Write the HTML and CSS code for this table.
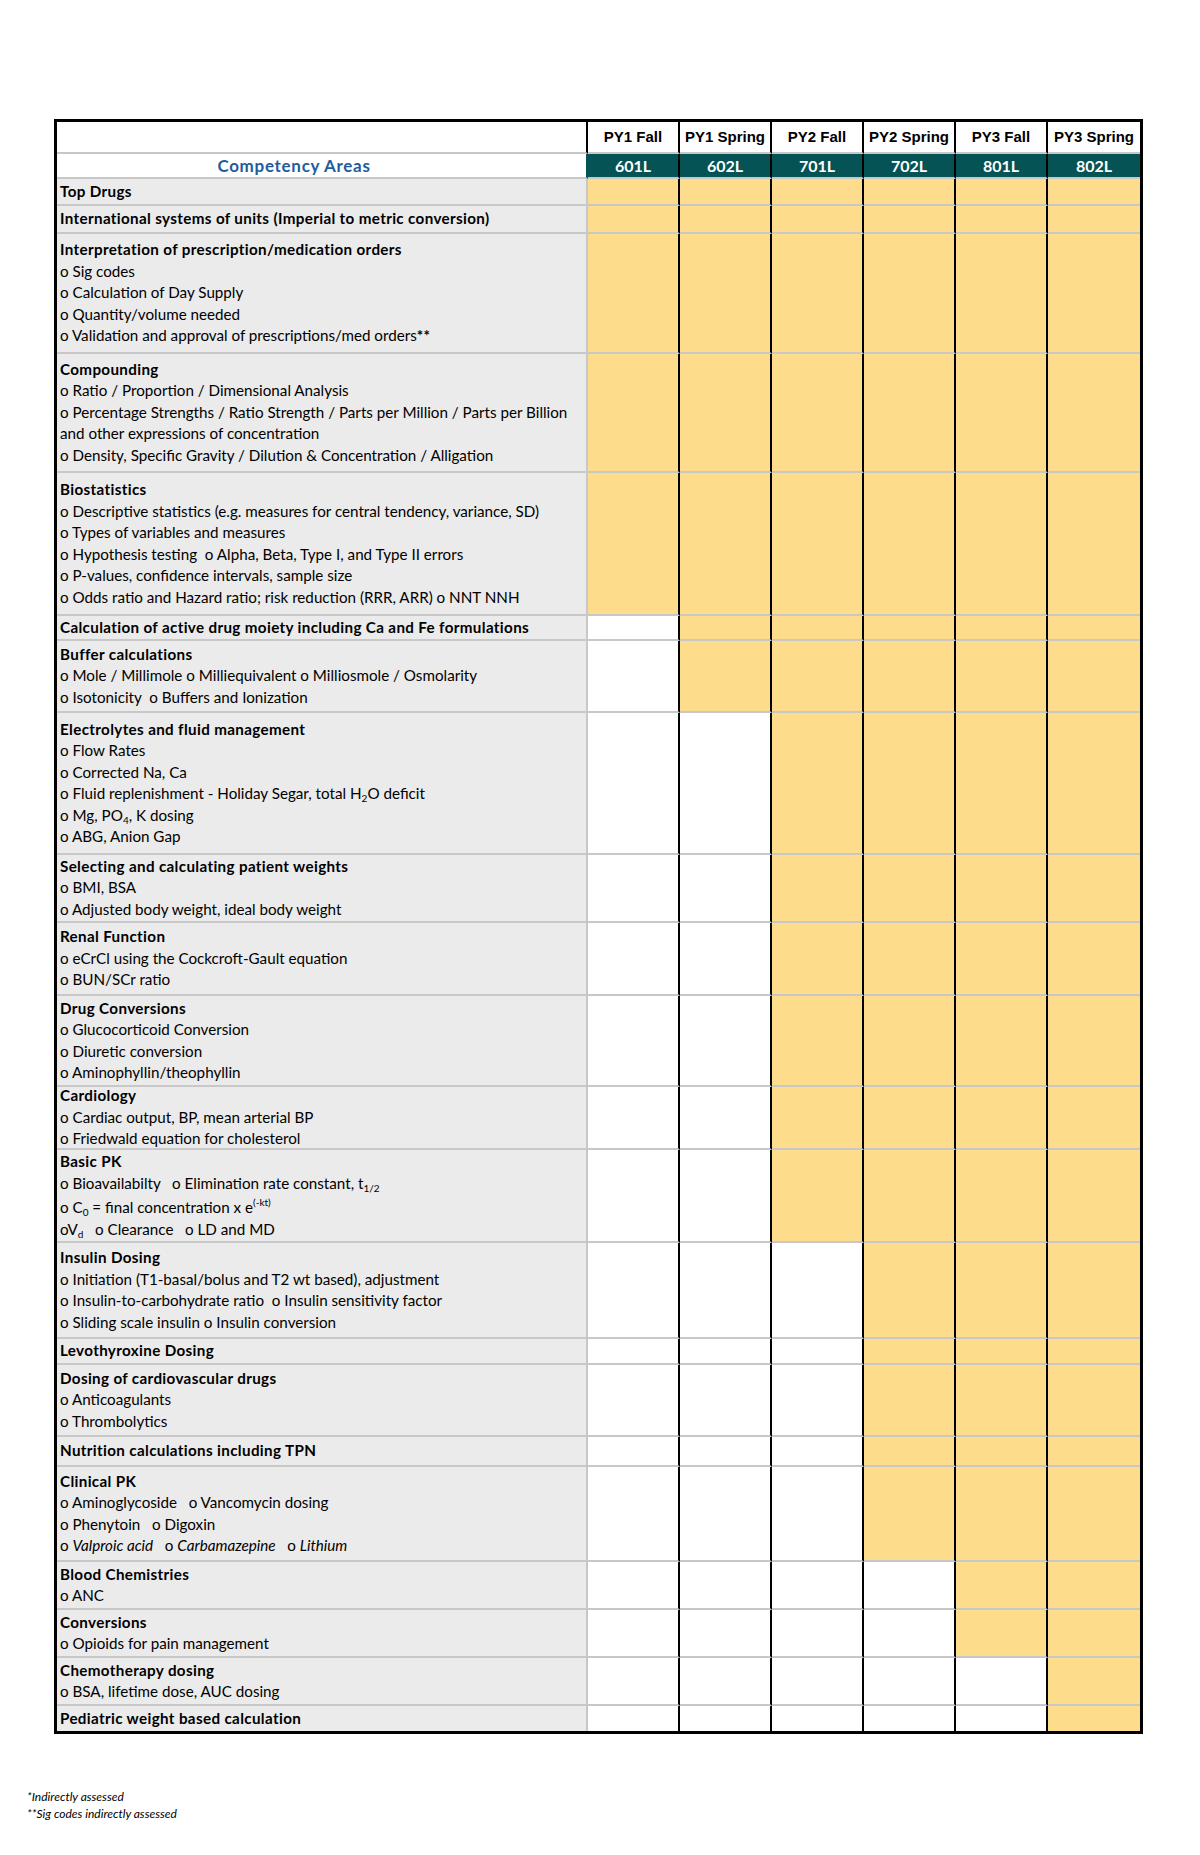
FILE: index.html
```html
<!DOCTYPE html>
<html lang="en">
<head>
<meta charset="utf-8">
<title>Competency Areas</title>
<link rel="stylesheet" href="styles.css">
</head>
<body>
<div class="page">
  <div class="sheet">
    <div class="row hdr1">
      <div class="lab"></div>
      <div class="c">PY1 Fall</div><div class="c">PY1 Spring</div><div class="c">PY2 Fall</div><div class="c">PY2 Spring</div><div class="c">PY3 Fall</div><div class="c">PY3 Spring</div>
    </div>
    <div class="row hdr2">
      <div class="lab">Competency Areas</div>
      <div class="c">601L</div><div class="c">602L</div><div class="c">701L</div><div class="c">702L</div><div class="c">801L</div><div class="c">802L</div>
    </div>

    <div class="row h27">
      <div class="lab"><b>Top Drugs</b></div>
      <div class="c y"></div><div class="c y"></div><div class="c y"></div><div class="c y"></div><div class="c y"></div><div class="c y"></div>
    </div>
    <div class="row h28">
      <div class="lab"><b>International systems of units (Imperial to metric conversion)</b></div>
      <div class="c y"></div><div class="c y"></div><div class="c y"></div><div class="c y"></div><div class="c y"></div><div class="c y"></div>
    </div>
    <div class="row h120">
      <div class="lab"><b>Interpretation of prescription/medication orders</b><span>o Sig codes</span><span>o Calculation of Day Supply</span><span>o Quantity/volume needed</span><span>o Validation and approval of prescriptions/med orders<b>**</b></span></div>
      <div class="c y"></div><div class="c y"></div><div class="c y"></div><div class="c y"></div><div class="c y"></div><div class="c y"></div>
    </div>
    <div class="row h119">
      <div class="lab"><b>Compounding</b><span>o Ratio / Proportion / Dimensional Analysis</span><span>o Percentage Strengths / Ratio Strength / Parts per Million / Parts per Billion</span><span>and other expressions of concentration</span><span>o Density, Specific Gravity / Dilution &amp; Concentration / Alligation</span></div>
      <div class="c y"></div><div class="c y"></div><div class="c y"></div><div class="c y"></div><div class="c y"></div><div class="c y"></div>
    </div>
    <div class="row h143">
      <div class="lab"><b>Biostatistics</b><span>o Descriptive statistics (e.g. measures for central tendency, variance, SD)</span><span>o Types of variables and measures</span><span>o Hypothesis testing&nbsp; o Alpha, Beta, Type I, and Type II errors</span><span>o P-values, confidence intervals, sample size</span><span>o Odds ratio and Hazard ratio; risk reduction (RRR, ARR) o NNT NNH</span></div>
      <div class="c y"></div><div class="c y"></div><div class="c y"></div><div class="c y"></div><div class="c y"></div><div class="c y"></div>
    </div>
    <div class="row h25">
      <div class="lab"><b>Calculation of active drug moiety including Ca and Fe formulations</b></div>
      <div class="c"></div><div class="c y"></div><div class="c y"></div><div class="c y"></div><div class="c y"></div><div class="c y"></div>
    </div>
    <div class="row h72">
      <div class="lab"><b>Buffer calculations</b><span>o Mole / Millimole o Milliequivalent o Milliosmole / Osmolarity</span><span>o Isotonicity&nbsp; o Buffers and Ionization</span></div>
      <div class="c"></div><div class="c y"></div><div class="c y"></div><div class="c y"></div><div class="c y"></div><div class="c y"></div>
    </div>
    <div class="row h142">
      <div class="lab"><b>Electrolytes and fluid management</b><span>o Flow Rates</span><span>o Corrected Na, Ca</span><span>o Fluid replenishment - Holiday Segar, total H<sub>2</sub>O deficit</span><span>o Mg, PO<sub>4</sub>, K dosing</span><span>o ABG, Anion Gap</span></div>
      <div class="c"></div><div class="c"></div><div class="c y"></div><div class="c y"></div><div class="c y"></div><div class="c y"></div>
    </div>
    <div class="row h68">
      <div class="lab"><b>Selecting and calculating patient weights</b><span>o BMI, BSA</span><span>o Adjusted body weight, ideal body weight</span></div>
      <div class="c"></div><div class="c"></div><div class="c y"></div><div class="c y"></div><div class="c y"></div><div class="c y"></div>
    </div>
    <div class="row h73">
      <div class="lab"><b>Renal Function</b><span>o eCrCl using the Cockcroft-Gault equation</span><span>o BUN/SCr ratio</span></div>
      <div class="c"></div><div class="c"></div><div class="c y"></div><div class="c y"></div><div class="c y"></div><div class="c y"></div>
    </div>
    <div class="row h91">
      <div class="lab"><b>Drug Conversions</b><span>o Glucocorticoid Conversion</span><span>o Diuretic conversion</span><span>o Aminophyllin/theophyllin</span></div>
      <div class="c"></div><div class="c"></div><div class="c y"></div><div class="c y"></div><div class="c y"></div><div class="c y"></div>
    </div>
    <div class="row h63">
      <div class="lab"><b>Cardiology</b><span>o Cardiac output, BP, mean arterial BP</span><span>o Friedwald equation for cholesterol</span></div>
      <div class="c"></div><div class="c"></div><div class="c y"></div><div class="c y"></div><div class="c y"></div><div class="c y"></div>
    </div>
    <div class="row h93">
      <div class="lab"><b>Basic PK</b><span>o Bioavailabilty&nbsp;&nbsp; o Elimination rate constant, t<sub>1/2</sub></span><span class="tall">o C<sub>0</sub> = final concentration x e<sup>(-kt)</sup></span><span>oV<sub>d</sub>&nbsp;&nbsp; o Clearance&nbsp;&nbsp; o LD and MD</span></div>
      <div class="c"></div><div class="c"></div><div class="c y"></div><div class="c y"></div><div class="c y"></div><div class="c y"></div>
    </div>
    <div class="row h96">
      <div class="lab"><b>Insulin Dosing</b><span>o Initiation (T1-basal/bolus and T2 wt based), adjustment</span><span>o Insulin-to-carbohydrate ratio&nbsp; o Insulin sensitivity factor</span><span>o Sliding scale insulin o Insulin conversion</span></div>
      <div class="c"></div><div class="c"></div><div class="c"></div><div class="c y"></div><div class="c y"></div><div class="c y"></div>
    </div>
    <div class="row h26">
      <div class="lab"><b>Levothyroxine Dosing</b></div>
      <div class="c"></div><div class="c"></div><div class="c"></div><div class="c y"></div><div class="c y"></div><div class="c y"></div>
    </div>
    <div class="row h72">
      <div class="lab"><b>Dosing of cardiovascular drugs</b><span>o Anticoagulants</span><span>o Thrombolytics</span></div>
      <div class="c"></div><div class="c"></div><div class="c"></div><div class="c y"></div><div class="c y"></div><div class="c y"></div>
    </div>
    <div class="row h30">
      <div class="lab"><b>Nutrition calculations including TPN</b></div>
      <div class="c"></div><div class="c"></div><div class="c"></div><div class="c y"></div><div class="c y"></div><div class="c y"></div>
    </div>
    <div class="row h95">
      <div class="lab"><b>Clinical PK</b><span>o Aminoglycoside&nbsp;&nbsp; o Vancomycin dosing</span><span>o Phenytoin&nbsp;&nbsp; o Digoxin</span><span>o <i>Valproic acid</i>&nbsp;&nbsp; o <i>Carbamazepine</i>&nbsp;&nbsp; o <i>Lithium</i></span></div>
      <div class="c"></div><div class="c"></div><div class="c"></div><div class="c y"></div><div class="c y"></div><div class="c y"></div>
    </div>
    <div class="row h48">
      <div class="lab"><b>Blood Chemistries</b><span>o ANC</span></div>
      <div class="c"></div><div class="c"></div><div class="c"></div><div class="c"></div><div class="c y"></div><div class="c y"></div>
    </div>
    <div class="row h48">
      <div class="lab"><b>Conversions</b><span>o Opioids for pain management</span></div>
      <div class="c"></div><div class="c"></div><div class="c"></div><div class="c"></div><div class="c y"></div><div class="c y"></div>
    </div>
    <div class="row h48">
      <div class="lab"><b>Chemotherapy dosing</b><span>o BSA, lifetime dose, AUC dosing</span></div>
      <div class="c"></div><div class="c"></div><div class="c"></div><div class="c"></div><div class="c"></div><div class="c y"></div>
    </div>
    <div class="row h25 last">
      <div class="lab"><b>Pediatric weight based calculation</b></div>
      <div class="c"></div><div class="c"></div><div class="c"></div><div class="c"></div><div class="c"></div><div class="c y"></div>
    </div>
  </div>

  <div class="notes">
    <p>*Indirectly assessed</p>
    <p>**Sig codes indirectly assessed</p>
  </div>
</div>
</body>
</html>
```

FILE: styles.css
```css
html, body {
  margin: 0;
  padding: 0;
  background: #ffffff;
}

body {
  width: 1200px;
  height: 1855px;
  font-family: Lato, "Liberation Sans", sans-serif;
  color: #000000;
}

.page {
  padding-top: 119px;
}

.sheet {
  margin-left: 54px;
  width: 1083px;
  border: 3px solid #000000;
}

.row {
  display: grid;
  grid-template-columns: 531px repeat(6, 92px);
  grid-template-rows: minmax(0, 1fr);
  box-sizing: border-box;
}

.row > div {
  box-sizing: border-box;
  min-height: 0;
  border-bottom: 2px solid #c8c8c8;
}

.row.last > div {
  border-bottom: none;
}

.c {
  background: #ffffff;
  border-right: 2px solid #000000;
}

.c:last-child {
  border-right: none;
}

.c.y {
  background: #fddc8b;
}

.lab {
  background: #ebebeb;
  border-right: 2px solid #c8c8c8;
  padding-left: 3px;
  display: flex;
  flex-direction: column;
  justify-content: center;
  font-size: 15.2px;
  line-height: 21.5px;
  white-space: nowrap;
}

.lab b {
  font-weight: 700;
  letter-spacing: 0.35px;
}

.lab span {
  display: block;
}

.lab sub {
  font-size: 10px;
  line-height: 0;
  vertical-align: -3px;
}

.lab sup {
  font-size: 10px;
  line-height: 0;
  vertical-align: 7px;
}

.lab .tall {
  padding-top: 3px;
}

/* header rows */
.hdr1 {
  height: 32px;
}

.hdr1 .lab {
  background: #ffffff;
  border-right: 2px solid #000000;
}

.hdr1 .c {
  display: flex;
  align-items: center;
  justify-content: center;
  padding-bottom: 1px;
  font-family: "Liberation Sans", Arial, sans-serif;
  font-weight: 700;
  font-size: 15px;
}

.hdr2 {
  height: 25px;
}

.hdr2 .lab {
  background: #ffffff;
  border-right: 2px solid #055355;
  align-items: center;
  padding-right: 58px;
  color: #1f5c9e;
  font-weight: 700;
  font-size: 17px;
  letter-spacing: 0.7px;
}

.hdr2 .c {
  background: #055355;
  color: #ffffff;
  font-weight: 700;
  font-size: 16px;
  display: flex;
  align-items: center;
  justify-content: center;
}

/* row heights */
.h25 { height: 25px; }
.h26 { height: 26px; }
.h27 { height: 27px; }
.h28 { height: 28px; }
.h30 { height: 30px; }
.h48 { height: 48px; }
.h63 { height: 63px; }
.h68 { height: 68px; }
.h72 { height: 72px; }
.h73 { height: 73px; }
.h91 { height: 91px; }
.h93 { height: 93px; }
.h95 { height: 95px; }
.h96 { height: 96px; }
.h119 { height: 119px; }
.h120 { height: 120px; }
.h142 { height: 142px; }
.h143 { height: 143px; }

.notes {
  margin: 54px 0 0 27px;
  font-style: italic;
  font-size: 12px;
  line-height: 17px;
}

.notes p {
  margin: 0;
}
```
